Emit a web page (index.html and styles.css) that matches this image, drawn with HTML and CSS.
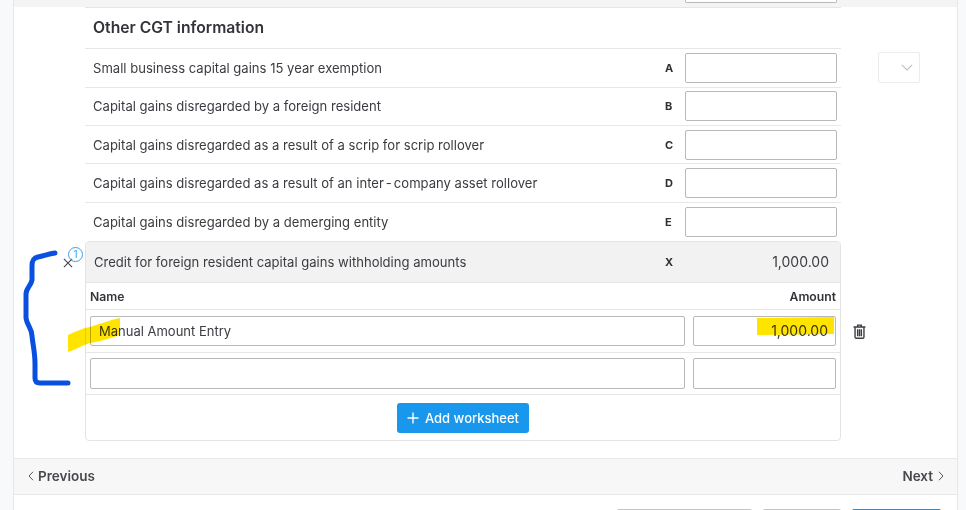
FILE: index.html
```html
<!DOCTYPE html>
<html lang="en">
<head>
<meta charset="utf-8">
<title>Other CGT information</title>
<link rel="stylesheet" href="styles.css">
</head>
<body>
<div class="panel">
  <div class="top-strip">
    <div class="top-inner"><span class="stub-input"></span></div>
  </div>
  <div class="content">
    <section class="section">
      <h2 class="title">Other CGT information</h2>
      <div class="row"><span class="row-label">Small business capital gains 15 year exemption</span><b class="code">A</b><span class="field"></span></div>
      <div class="row"><span class="row-label">Capital gains disregarded by a foreign resident</span><b class="code">B</b><span class="field"></span></div>
      <div class="row"><span class="row-label">Capital gains disregarded as a result of a scrip for scrip rollover</span><b class="code">C</b><span class="field"></span></div>
      <div class="row"><span class="row-label">Capital gains disregarded as a result of an inter<span class="hyphen">-</span>company asset rollover</span><b class="code">D</b><span class="field"></span></div>
      <div class="row row-last"><span class="row-label">Capital gains disregarded by a demerging entity</span><b class="code">E</b><span class="field"></span></div>

      <div class="card">
        <div class="card-head"><span class="card-label">Credit for foreign resident capital gains withholding amounts</span><b class="code card-code">X</b><span class="card-value">1,000.00</span></div>
        <div class="col-head"><span>Name</span><span>Amount</span></div>
        <div class="entry"><span class="box box-name">Manual Amount Entry</span><span class="box box-amount">1,000.00</span></div>
        <div class="entry entry-empty"><span class="box box-name"></span><span class="box box-amount"></span></div>
        <div class="card-foot"><button class="add-btn"><svg class="plus" viewBox="0 0 12 12"><path d="M6 .5v11M.5 6h11"/></svg>Add worksheet</button></div>
      </div>
    </section>
    <div class="dropdown"><svg class="chev" viewBox="0 0 12 7"><path d="M.8.8 6 6l5.2-5.2"/></svg></div>
  </div>
  <nav class="pager">
    <a class="pager-link"><svg class="pager-chev" viewBox="0 0 6 10"><path d="M5 .8 1 5l4 4.2"/></svg>Previous</a>
    <a class="pager-link">Next<svg class="pager-chev" viewBox="0 0 6 10"><path d="M1 .8 5 5 1 9.2"/></svg></a>
  </nav>
  <div class="actions"><span class="act act-a"></span><span class="act act-b"></span><span class="act act-c"></span></div>
</div>

<div class="clear-mark">
  <svg class="x-icon" viewBox="0 0 11 11"><path d="M1 1l9 9M10 1l-9 9"/></svg>
  <span class="badge">1</span>
</div>
<svg class="trash" viewBox="0 0 14 16"><path d="M5 2.6V1.1h4v1.5M.6 3.2h12.8M2.2 3.4v10.5c0 .8.5 1.3 1.3 1.3h7c.8 0 1.3-.5 1.3-1.3V3.4M5 5.5v7.5M7 5.5v7.5M9 5.5v7.5"/></svg>

<svg class="ink" viewBox="0 0 966 510">
  <path class="ink-yellow" d="M68 335 C76 331 84 328 90 327 C100 324 110 320 120 318 L120 335 C110 338 100 342 90 343 C82 345 76 350 68 352 Z"/>
  <path class="ink-yellow" d="M757 318 L834 317 L834 334 L757 335 Z"/>
  <path class="ink-blue" d="M55 253 C48 254 44 256 38 257 C33 258 32 261 32 266 L32 280 C31 286 26 288 26 294 L26 318 C27 326 32 328 32 336 C33 346 35 352 35 364 L35 378 C35 382 37 383 40 383 L68 383"/>
</svg>
</body>
</html>
```
FILE: styles.css
```css
* { box-sizing: border-box; }
html, body { margin: 0; height: 510px; overflow: hidden; }
body { position: relative; background: #f8f9fb; font-family: Inter, "Liberation Sans", sans-serif; font-size: 13.07px; color: #3b3b42; }
.panel { margin: 0 8px 0 13px; height: 510px; background: #fff; border-left: 1px solid #e6e7ea; border-right: 1px solid #e6e7ea; display: flex; flex-direction: column; }
.top-strip { height: 8px; flex: none; background: linear-gradient(#f4f4f4 7px, #fff 7px); }
.top-inner { margin-left: 71px; width: 756px; height: 8px; border-bottom: 1px solid #e6e6ea; display: flex; justify-content: flex-end; padding-right: 4px; }
.stub-input { width: 152px; height: 3px; background: #fff; border: 1px solid #b9b9b9; border-top: 0; border-radius: 0 0 2px 2px; }
.content { flex: none; height: 450px; display: flex; padding-left: 71px; }
.section { width: 756px; flex: none; }
.title { margin: 0; height: 41.3px; padding-left: 8px; font-size: 15.7px; font-weight: 600; line-height: 40px; color: #33333a; border-bottom: 1px solid #e6e6ea; }
.row { height: 38.4px; display: flex; align-items: center; border-bottom: 1px solid #e8e8ec; padding: 0 4px 0 8px; }
.row-last { height: 38.1px; border-bottom: 0; }
.row-label { flex: 1; }
.hyphen { margin: 0 2px; }
.code { font-size: 11px; font-weight: 700; width: 20px; color: #2f2f35; }
.field { width: 152px; height: 30px; background: #fff; border: 1px solid #b9b9b9; border-radius: 2px; }
.card { height: 200px; border: 1px solid #e4e4e6; border-radius: 4px; }
.card-head { height: 41px; display: flex; align-items: center; background: #f2f2f2; border-bottom: 1px solid #e6e6e8; padding: 0 11px 0 8px; border-radius: 3px 3px 0 0; }
.card-label { flex: 1; }
.card-code { width: 34px; }
.card-value { width: 130px; text-align: right; font-size: 14px; }
.col-head { height: 27px; display: flex; justify-content: space-between; align-items: center; font-size: 12.2px; font-weight: 600; padding: 1px 4px 0; border-bottom: 1px solid #e6e6e8; color: #33333a; }
.entry { height: 43px; display: flex; align-items: center; gap: 8px; padding: 0 4px; border-bottom: 1px solid #e6e6e8; }
.entry-empty { height: 42px; }
.entry-empty .box { height: 31px; }
.box { height: 30px; border: 1px solid #b9b9b9; border-radius: 2px; display: flex; align-items: center; }
.box-name { width: 595px; padding-left: 8px; font-size: 13px; }
.box-amount { width: 143px; justify-content: flex-end; padding-right: 7px; font-size: 14px; }
.card-foot { display: flex; justify-content: center; padding-top: 8px; }
.add-btn { width: 132px; height: 30px; border: 0; border-radius: 3px; background: #1897ec; color: #fff; font: 500 13px Inter, "Liberation Sans", sans-serif; display: flex; align-items: center; justify-content: center; gap: 6px; padding: 0; }
.plus { width: 12px; height: 12px; fill: none; stroke: #fff; stroke-width: 1.4; }
.dropdown { margin: 44px 0 0 37px; width: 42px; height: 31px; border: 1px solid #ececee; border-radius: 2px; display: flex; align-items: center; justify-content: flex-end; padding-right: 6px; }
.chev { width: 12px; height: 7px; fill: none; stroke: #bdbdc2; stroke-width: 1.1; }
.pager { flex: none; height: 37px; display: flex; justify-content: space-between; align-items: center; padding: 0 13px 2px 14px; background: #f7f7f7; border-top: 1px solid #e9e9e9; border-bottom: 1px solid #e9e9e9; font-weight: 600; font-size: 13.5px; color: #48484e; }
.pager-link { display: flex; align-items: center; gap: 4px; }
.pager-link:last-child { gap: 5px; }
.pager-chev { width: 6px; height: 10px; fill: none; stroke: #55555b; stroke-width: 1; }
.actions { flex: 1; display: flex; justify-content: flex-end; padding: 14px 16px 0 0; gap: 11px; }
.act { height: 2px; border-radius: 3px 3px 0 0; }
.act-a { width: 135px; background: #c4c4c4; }
.act-b { width: 78px; background: #c4c4c4; }
.act-c { width: 89px; background: #1f8fe0; }
.clear-mark { position: absolute; left: 63px; top: 247px; width: 22px; height: 22px; }
.x-icon { position: absolute; left: 0; top: 11px; width: 10px; height: 10px; fill: none; stroke: #45454a; stroke-width: 1.2; }
.badge { position: absolute; left: 5px; top: 0; width: 15px; height: 15px; border: 1px solid #35a2ee; border-radius: 50%; color: #35a2ee; font-size: 10px; line-height: 13px; text-align: center; }
.trash { position: absolute; left: 853px; top: 324px; width: 13px; height: 15px; fill: none; stroke: #3d3d43; stroke-width: 1.5; }
.ink { position: absolute; left: 0; top: 0; width: 966px; height: 510px; pointer-events: none; }
.ink-yellow { fill: #ffe400; mix-blend-mode: multiply; }
.ink-blue { fill: none; stroke: #0a50e0; stroke-width: 5; stroke-linecap: round; stroke-linejoin: round; }
```
